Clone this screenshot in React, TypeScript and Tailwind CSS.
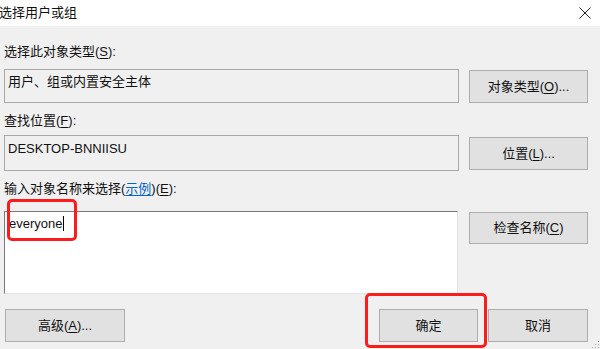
const font = {
  fontFamily: '"Liberation Sans", "Noto Sans CJK SC", sans-serif',
};

function Btn({ children, className = "" }: { children: React.ReactNode; className?: string }) {
  return (
    <div
      className={`flex items-center justify-center border border-[#adadad] bg-[#e1e1e1] text-[13px] text-[#111] ${className}`}
    >
      {children}
    </div>
  );
}

function Key({ k }: { k: string }) {
  return <span className="underline underline-offset-2">{k}</span>;
}

export default function App() {
  return (
    <div
      className="relative w-[600px] h-[349px] overflow-hidden bg-[#f0f0f0] text-[#111]"
      style={font}
    >
      {/* title bar */}
      <div className="h-[26px] bg-white flex items-center justify-between">
        <span className="text-[13px] -ml-px leading-[16px]">选择用户或组</span>
        <svg width="12" height="12" viewBox="0 0 12 12" className="mr-[9px]">
          <path d="M0.5 0.5 L11.5 11.5 M11.5 0.5 L0.5 11.5" stroke="#222" strokeWidth="1" />
        </svg>
      </div>

      <div className="pl-[4px]">
        <div className="mt-[18px] h-[16px] leading-[16px] text-[13px]">
          选择此对象类型(<Key k="S" />):
        </div>
        <div className="mt-[9px] flex">
          <div className="w-[455px] h-[34px] border border-[#a8a8a8] bg-[#f0f0f0] pl-[3px] pt-[4px] text-[13px] leading-[16px]">
            用户、组或内置安全主体
          </div>
          <Btn className="ml-[10px] mt-px w-[119px] h-[33px]">
            对象类型(<Key k="O" />)...
          </Btn>
        </div>

        <div className="mt-[10px] h-[16px] leading-[16px] text-[13px]">
          查找位置(<Key k="F" />):
        </div>
        <div className="mt-[6px] flex">
          <div className="w-[455px] h-[36px] border border-[#a8a8a8] bg-[#f0f0f0] pl-[3px] pt-[5px] text-[13px] leading-[16px]">
            DESKTOP-BNNIISU
          </div>
          <Btn className="ml-[10px] mt-[2px] w-[119px] h-[33px]">
            位置(<Key k="L" />)...
          </Btn>
        </div>

        <div className="mt-[10px] h-[16px] leading-[16px] text-[13px]">
          输入对象名称来选择(
          <span className="text-[#0066cc] underline underline-offset-2">示例</span>)(<Key k="E" />):
        </div>
        <div className="mt-[14px] flex">
          <div className="w-[454px] h-[83px] bg-white border-t border-l border-t-[#7a7a7a] border-l-[#7a7a7a] border-r border-b border-r-[#e3e3e3] border-b-[#e3e3e3] pl-[4px] pt-[4px] text-[13px] leading-[16px] flex items-start">
            <span>everyone</span>
            <span className="inline-block w-px h-[15px] bg-black ml-px" />
          </div>
          <Btn className="ml-[11px] mt-px w-[119px] h-[32px]">
            检查名称(<Key k="C" />)
          </Btn>
        </div>

        <div className="mt-[15px] flex">
          <Btn className="ml-px w-[120px] h-[33px]">
            高级(<Key k="A" />)...
          </Btn>
          <Btn className="ml-[254px] w-[99px] h-[33px]">确定</Btn>
          <Btn className="ml-[10px] w-[100px] h-[33px]">取消</Btn>
        </div>
      </div>

      {/* red highlight marks */}
      <div className="absolute left-[7px] top-[199px] w-[70px] h-[42px] border-[3px] border-[#fb1d1d] rounded-[5px]" />
      <div className="absolute left-[365px] top-[293px] w-[122px] h-[55px] border-[3px] border-[#fb1d1d] rounded-[5px]" />

      {/* resize grip */}
      <svg width="8" height="8" viewBox="0 0 8 8" className="absolute right-0 bottom-0">
        <rect x="6" y="0" width="1" height="1" fill="#aaa" />
        <rect x="3" y="3" width="1" height="1" fill="#aaa" />
        <rect x="6" y="3" width="1" height="1" fill="#aaa" />
        <rect x="0" y="6" width="1" height="1" fill="#aaa" />
        <rect x="3" y="6" width="1" height="1" fill="#aaa" />
        <rect x="6" y="6" width="1" height="1" fill="#aaa" />
      </svg>
    </div>
  );
}
